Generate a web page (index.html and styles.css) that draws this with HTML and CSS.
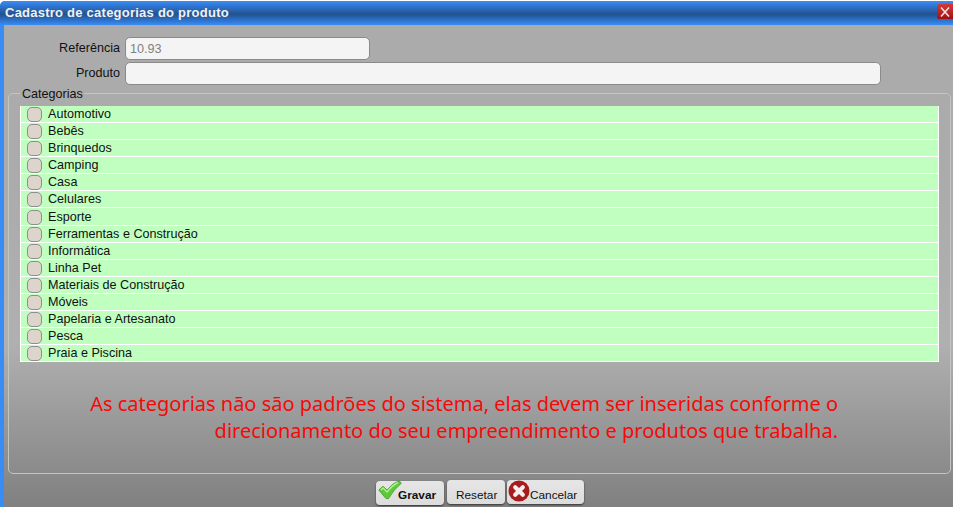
FILE: index.html
```html
<!DOCTYPE html>
<html lang="pt-BR">
<head>
<meta charset="utf-8">
<title>Cadastro de categorias do produto</title>
<link rel="stylesheet" href="styles.css">
</head>
<body>
<div class="dialog">
  <header class="titlebar">
    <span class="title">Cadastro de categorias do produto</span>
    <button class="close" type="button" aria-label="Fechar">
      <svg width="14" height="14" viewBox="0 0 14 14"><path d="M3 2.5 L11 11.5 M11 2.5 L3 11.5" stroke="#f6dcdc" stroke-width="1.7" fill="none"/></svg>
    </button>
  </header>
  <main class="content">
    <div class="form">
      <label class="lbl">Referência</label>
      <input class="field short" value="10.93" disabled>
      <label class="lbl">Produto</label>
      <input class="field long">
    </div>
    <fieldset class="group">
      <legend class="legend">Categorias</legend>
      <ul class="list">
        <li class="row"><span class="check"></span>Automotivo</li>
        <li class="row"><span class="check"></span>Bebês</li>
        <li class="row"><span class="check"></span>Brinquedos</li>
        <li class="row"><span class="check"></span>Camping</li>
        <li class="row"><span class="check"></span>Casa</li>
        <li class="row"><span class="check"></span>Celulares</li>
        <li class="row"><span class="check"></span>Esporte</li>
        <li class="row"><span class="check"></span>Ferramentas e Construção</li>
        <li class="row"><span class="check"></span>Informática</li>
        <li class="row"><span class="check"></span>Linha Pet</li>
        <li class="row"><span class="check"></span>Materiais de Construção</li>
        <li class="row"><span class="check"></span>Móveis</li>
        <li class="row"><span class="check"></span>Papelaria e Artesanato</li>
        <li class="row"><span class="check"></span>Pesca</li>
        <li class="row"><span class="check"></span>Praia e Piscina</li>
      </ul>
      <p class="notice">As categorias não são padrões do sistema, elas devem ser inseridas conforme o<br>direcionamento do seu empreendimento e produtos que trabalha.</p>
    </fieldset>
    <div class="actions">
      <button class="btn bold" type="button">
        <svg class="ico-check" width="24" height="20" viewBox="0 0 24 20"><path d="M0.8 10 L5 6.2 L9 10 Q14 3.5 21 0.8 L23.4 3.2 Q16 9 10.5 18.6 L8 18.6 Z" fill="#5cc83a" stroke="#3f9a2a" stroke-width="0.8"/><path d="M3 10 L5 8 L9 12 Q14 5.5 20 2.5" fill="none" stroke="#b4ee94" stroke-width="1.4"/></svg>Gravar
      </button>
      <button class="btn plain" type="button">Resetar</button>
      <button class="btn cancel" type="button">
        <svg class="ico-x" width="22" height="22" viewBox="0 0 22 22"><circle cx="11" cy="11" r="10.5" fill="#a81c1c"/><path d="M7.2 7.2 L14.8 14.8 M14.8 7.2 L7.2 14.8" stroke="#f4efef" stroke-width="4.2" stroke-linecap="round"/></svg>Cancelar
      </button>
    </div>
  </main>
</div>
</body>
</html>
```
FILE: styles.css
```css
* { box-sizing: border-box; }
html, body { margin: 0; height: 100%; overflow: hidden; background: #fff; }
body { font-family: "Liberation Sans", Arial, sans-serif; font-size: 12.6px; color: #111; }
.dialog { display: flex; flex-direction: column; height: 507px; margin-top: 1px; border-radius: 5px 0 0 0; background: #3a8cf5; }
.titlebar {
  height: 24px; flex: none; display: flex; align-items: center; justify-content: space-between;
  padding-left: 5px; border-radius: 5px 0 0 0;
  background: linear-gradient(#3a8cf5 0%, #2f78d4 20%, #22528f 55%, #2f78d4 85%, #3a8cf5 100%);
}
.title { color: #f2f2f2; font-weight: bold; font-size: 13px; letter-spacing: 0.24px; margin-bottom: 2px; }
.close {
  width: 16px; height: 15px; padding: 0; margin: 0 0 3px; border: 0; border-radius: 2px 0 0 2px;
  display: flex; align-items: center; justify-content: center;
  background: linear-gradient(#d23a3a, #a01010);
}
.content {
  flex: 1; min-height: 0; margin-left: 4px; padding: 12px 2px 0 4px;
  background: linear-gradient(#ababab 0%, #ababab 30%, #b0b0b0 66%, #808080 100%);
}
.form { display: grid; grid-template-columns: 112px auto; column-gap: 5px; row-gap: 2px; align-items: center; justify-content: start; }
.lbl { text-align: right; font-size: 12.6px; padding-bottom: 2px; }
.field {
  height: 23px; border: 1px solid #8a8a8a; border-radius: 5px; background: #f4f4f4;
  padding: 0 4px; font: 12.6px "Liberation Sans", Arial, sans-serif; color: #111;
}
.field:disabled { color: #808080; background: #f4f4f4; opacity: 1; }
.short { width: 245px; }
.long { width: 756px; }
.group {
  margin: 0; padding: 4.1px 11px 0; height: 389px; min-width: 0;
  border: 1px solid #c4c4c4; border-radius: 5px;
}
.legend { padding: 2px 1px 0 2px; margin-left: 0; font-size: 12.6px; line-height: 15px; color: #111; }
.list { list-style: none; margin: 0; padding: 0; width: 919px; background: #fff; }
.row {
  height: 17.07px; display: flex; align-items: center; padding: 1.08px 0 0 6px;
  border: solid #fff; border-width: 0 1px 1px 1px; background: #c0ffc0; background-clip: padding-box;
  font-size: 12.6px; line-height: 15px;
}
.check {
  width: 15px; height: 15px; flex: none; margin-right: 6px; border: 1px solid #8e8e8e; border-radius: 5px; background: #ddd5cb;
}
.notice {
  margin: 28.4px 101px 0 0; text-align: right; color: #f80808;
  font-family: "Noto Sans", sans-serif; font-size: 19.99px; line-height: 27px;
}
.actions { display: flex; justify-content: center; margin-top: 6px; padding-left: 1px; }
.btn {
  height: 24px; padding: 6px 0 0; border: 0; border-radius: 4px; background: linear-gradient(#e6e6e6, #dcdcdc);
  box-shadow: 0 1px 2px #333; display: flex; align-items: center; color: #111;
  font: 11.8px "Liberation Sans", Arial, sans-serif; position: relative;
}
.bold { width: 68px; font-weight: bold; padding-top: 4px; padding-left: 22px; margin-top: 1px; margin-right: 3px; }
.plain { width: 58px; padding-left: 9px; margin-right: 2px; }
.cancel { width: 77px; padding-left: 23px; }
.ico-check { position: absolute; left: 2px; top: -1px; }
.ico-x { position: absolute; left: 1px; top: 0; }
```
